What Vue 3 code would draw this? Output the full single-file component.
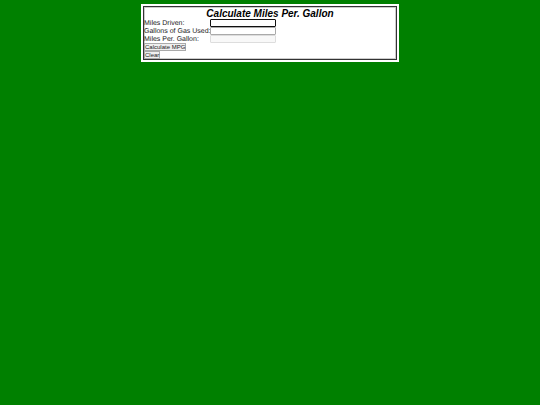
<script setup>
import { ref, onMounted } from 'vue'

const miles      = ref('')
const gallons    = ref('')
const mpg        = ref('')
const milesInput = ref(null)

function calculate() {
    const result = parseFloat(miles.value) / parseFloat(gallons.value)
    mpg.value = isFinite(result) ? result.toFixed(1) : ''
}

function clear() {
    miles.value   = ''
    gallons.value = ''
    mpg.value     = ''
    milesInput.value.focus()
}

onMounted(() => milesInput.value.focus())
</script>

<template>
    <main>
        <form class="calculator" @submit.prevent="calculate">
            <h1>Calculate Miles Per. Gallon</h1>
            <div class="fields">
                <label for="miles">Miles Driven:</label>
                <input id="miles" ref="milesInput" v-model="miles" type="text">
                <label for="gallons">Gallons of Gas Used:</label>
                <input id="gallons" v-model="gallons" type="text">
                <label for="mpg">Miles Per. Gallon:</label>
                <input id="mpg" v-model="mpg" type="text" disabled>
            </div>
            <div class="buttons">
                <button type="submit">Calculate MPG</button>
                <button type="button" @click="clear">Clear</button>
            </div>
        </form>
    </main>
</template>

<style>
body {
    margin: 0;
    background-color: #008000;
}
</style>

<style scoped>
* {
    box-sizing: border-box;
}
main {
    max-width: 258px;
    margin: 4px auto 0;
    padding: 2px;
    background-color: #FFF;
    font-family: "Liberation Sans", Arial, sans-serif;
    color: #000;
}
.calculator {
    border: 1px solid #333;
    box-shadow: inset 0 0 0 1px #CCC;
    padding: 1px 0 0;
}
h1 {
    margin: 0;
    font-size: 10px;
    line-height: 11px;
    font-style: italic;
    font-weight: 700;
    text-align: center;
}
.fields {
    display: grid;
    grid-template-columns: 64px 66px;
    grid-auto-rows: 8px;
    column-gap: 2px;
}
label {
    font-size: 7px;
    line-height: 10px;
    white-space: nowrap;
    color: #222;
    text-rendering: geometricPrecision;
}
input {
    width: 100%;
    height: 8px;
    padding: 0 1px;
    border: 1px solid #AAA;
    border-radius: 1px;
    outline: none;
    background-color: #FFF;
    font-family: inherit;
    font-size: 6px;
    line-height: 6px;
}
input:focus {
    border-color: #101010;
}
input:disabled {
    border-color: #DDD;
    background-color: #F8F8F8;
}
.buttons {
    display: flex;
    flex-direction: column;
    align-items: flex-start;
}
button {
    height: 8px;
    padding: 0;
    border: 1px solid #AAA;
    background-color: #EFEFEF;
    font-family: inherit;
    font-size: 6px;
    line-height: 6px;
    color: #222;
}
</style>
